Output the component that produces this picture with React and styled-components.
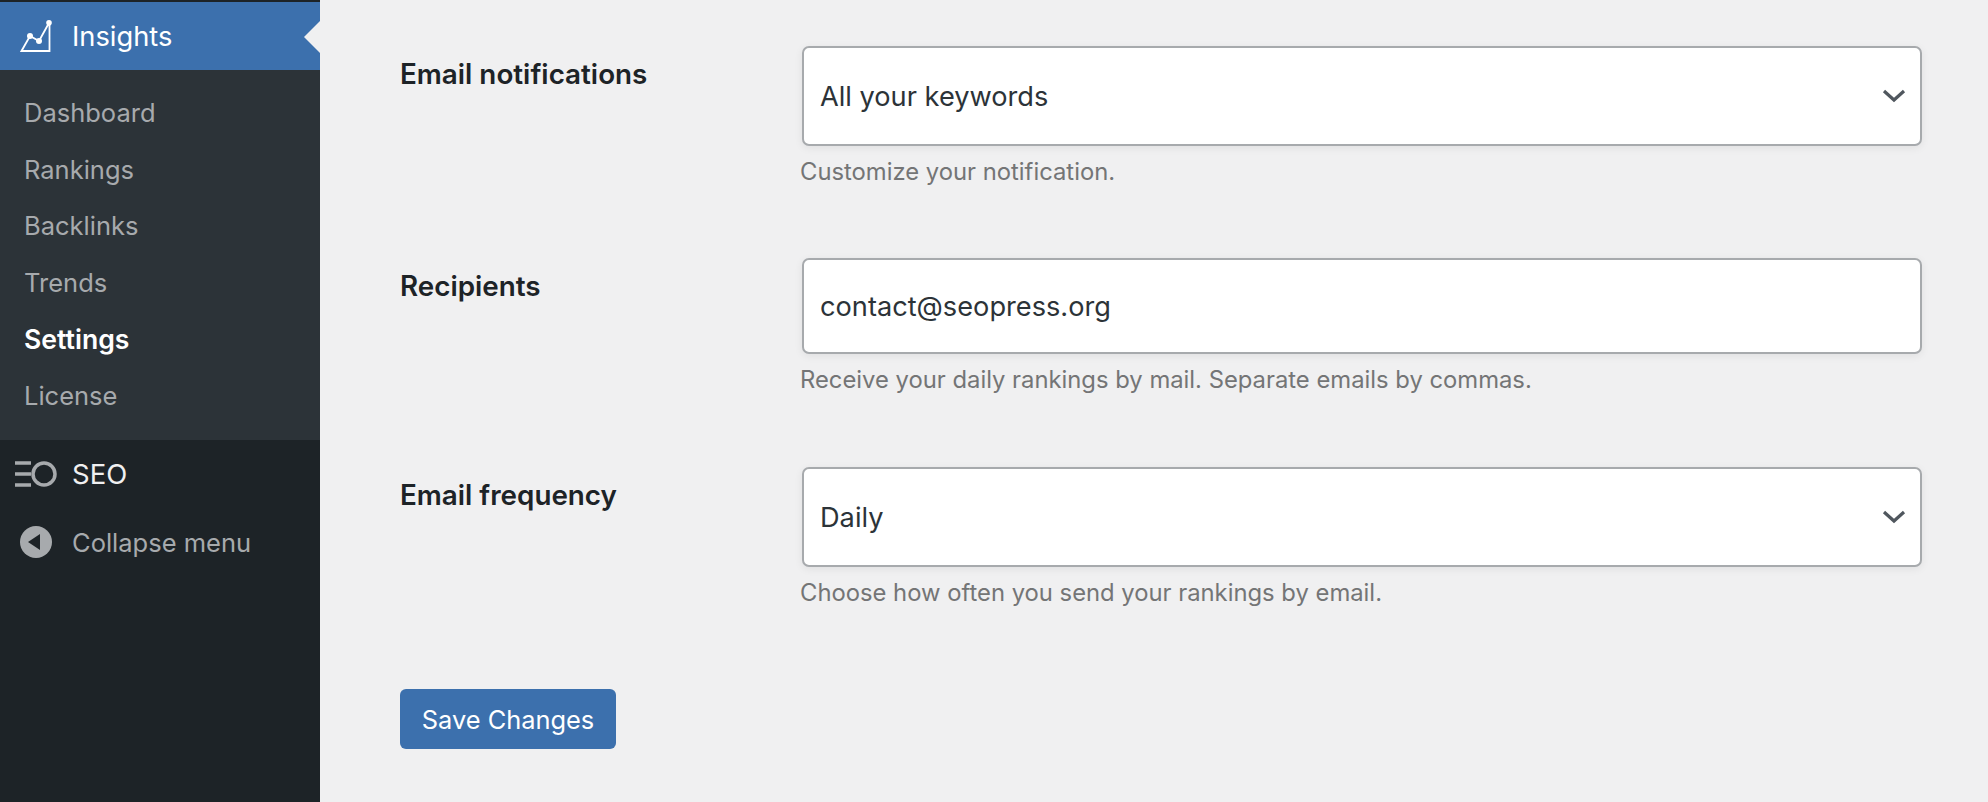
import React from "react";
import styled, { createGlobalStyle } from "styled-components";

const GlobalStyle = createGlobalStyle`
  html, body {
    margin: 0;
    padding: 0;
    height: 100%;
    background: #f0f0f1;
  }
  body {
    font-family: Inter, "Liberation Sans", sans-serif;
  }
`;

const Page = styled.div`
  display: flex;
  width: 1988px;
  height: 802px;
  overflow: hidden;
  background: #f0f0f1;
`;
const Sidebar = styled.nav`
  display: flex;
  flex-direction: column;
  flex: 0 0 320px;
  padding-top: 2px;
  box-sizing: border-box;
  background: #1d2327;
`;
const ActiveItem = styled.div`
  position: relative;
  display: grid;
  grid-template-columns: 72px 1fr;
  align-items: center;
  justify-items: start;
  height: 68px;
  background: #3c70ad;
  color: #fff;
  font-size: 27.3px;
  &::after {
    content: "";
    position: absolute;
    right: 0;
    top: 19px;
    border-top: 16px solid transparent;
    border-bottom: 16px solid transparent;
    border-right: 16px solid #f0f0f1;
  }
`;
const IconSlot = styled.span`
  display: flex;
  justify-self: center;
`;
const SubMenu = styled.ul`
  display: flex;
  flex-direction: column;
  height: 370px;
  margin: 0;
  padding: 15px 0 0 24px;
  box-sizing: border-box;
  list-style: none;
  background: #2c3338;
`;
const SubItem = styled.li`
  height: 56.6px;
  line-height: 56px;
  font-size: ${(p) => (p.$current ? "26.6px" : "25.5px")};
  color: ${(p) => (p.$current ? "#fff" : "#a7aaad")};
  font-weight: ${(p) => (p.$current ? 600 : 400)};
`;
const MenuItem = styled.div`
  display: grid;
  grid-template-columns: 72px 1fr;
  align-items: center;
  justify-items: start;
  height: 68px;
  font-size: ${(p) => (p.$muted ? "25.5px" : "27.5px")};
  color: ${(p) => (p.$muted ? "#a7aaad" : "#f0f0f1")};
`;
const Main = styled.main`
  display: flex;
  flex-direction: column;
  flex: 1;
  padding: 46px 66px 0 80px;
`;
const Field = styled.div`
  display: grid;
  grid-template-columns: 402px 1fr;
  margin-bottom: ${(p) => p.$gap}px;
`;
const Label = styled.label`
  padding-top: 11px;
  font-size: 27.8px;
  line-height: 34px;
  font-weight: 600;
  color: #1d2327;
`;
const Control = styled.div`
  display: flex;
  align-items: center;
  justify-content: space-between;
  height: ${(p) => p.$height}px;
  padding: 0 14px 0 16px;
  box-sizing: border-box;
  background: #fff;
  border: 2px solid #a7aaad;
  border-radius: 7px;
  box-shadow: 0 2px 8px rgba(0, 0, 0, 0.07);
  font-size: 27.2px;
  color: #2c3338;
`;
const Help = styled.p`
  margin: 10px 0 0 -2px;
  font-size: 23.8px;
  line-height: 32px;
  color: #747576;
`;
const SaveButton = styled.button`
  width: 216px;
  height: 60px;
  padding: 0;
  border: 0;
  border-radius: 6px;
  background: #3c70ad;
  color: #fff;
  font-family: inherit;
  font-size: 25.4px;
`;

const ChartIcon = () => (
  <svg width="32" height="32" viewBox="0 0 32 32" fill="none" stroke="#fff" strokeWidth="1.800">
    <path d="M1.500 31 10 16 19 21 29.500 2V31Z" />
    <circle cx="10" cy="16" r="3" fill="#fff" stroke="none" />
    <circle cx="19" cy="21" r="3" fill="#fff" stroke="none" />
    <circle cx="29" cy="2.800" r="2.800" fill="#fff" stroke="none" />
  </svg>
);

const SeoIcon = () => (
  <svg width="42" height="26" viewBox="0 0 42 26" fill="none" stroke="#a7aaad" strokeWidth="3.500">
    <path d="M0 2H16M0 13H16M0 24H16" />
    <circle cx="29" cy="13" r="11" />
  </svg>
);

const CollapseIcon = () => (
  <svg width="32" height="32" viewBox="0 0 32 32">
    <circle cx="16" cy="16" r="16" fill="#a7aaad" />
    <path d="M8 16 20 8V24Z" fill="#1d2327" />
  </svg>
);

const Chevron = () => (
  <svg width="24" height="16" viewBox="0 0 24 16" fill="none" stroke="#50575e" strokeWidth="3.200">
    <path d="M2 3 12 12 22 3" />
  </svg>
);

const links = ["Dashboard", "Rankings", "Backlinks", "Trends", "Settings", "License"];

export default function App() {
  return (
    <Page>
      <GlobalStyle />
      <Sidebar>
        <ActiveItem>
          <IconSlot>
            <ChartIcon />
          </IconSlot>
          Insights
        </ActiveItem>
        <SubMenu>
          {links.map((l) => (
            <SubItem key={l} $current={l === "Settings"}>
              {l}
            </SubItem>
          ))}
        </SubMenu>
        <MenuItem>
          <IconSlot>
            <SeoIcon />
          </IconSlot>
          SEO
        </MenuItem>
        <MenuItem $muted>
          <IconSlot>
            <CollapseIcon />
          </IconSlot>
          Collapse menu
        </MenuItem>
      </Sidebar>
      <Main>
        <Field $gap={70}>
          <Label>Email notifications</Label>
          <div>
            <Control $height={100}>
              All your keywords
              <Chevron />
            </Control>
            <Help>Customize your notification.</Help>
          </div>
        </Field>
        <Field $gap={71}>
          <Label>Recipients</Label>
          <div>
            <Control $height={96}>contact@seopress.org</Control>
            <Help>Receive your daily rankings by mail. Separate emails by commas.</Help>
          </div>
        </Field>
        <Field $gap={80}>
          <Label>Email frequency</Label>
          <div>
            <Control $height={100}>
              Daily
              <Chevron />
            </Control>
            <Help>Choose how often you send your rankings by email.</Help>
          </div>
        </Field>
        <SaveButton>Save Changes</SaveButton>
      </Main>
    </Page>
  );
}
